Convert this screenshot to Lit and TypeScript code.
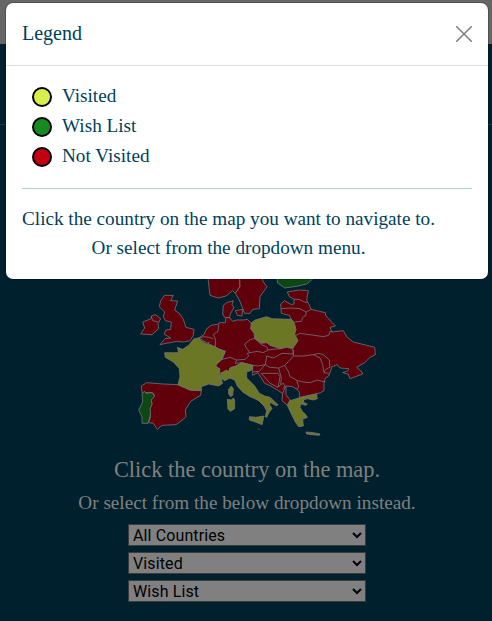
import { LitElement, html, css, svg } from "lit";
import { customElement } from "lit/decorators.js";

// Map geometry is drawn on a 750 x 510 grid, three units to a pixel.
const red = [
  // Great Britain, Ireland
  "M104 76 130 76 122 92 143 93 134 120 150 132 160 148 168 172 192 178 190 196 180 212 160 216 140 214 122 218 108 220 90 224 105 206 122 204 102 192 108 180 122 178 124 156 106 152 100 140 104 126 88 110 92 92Z",
  "M64 138 76 134 92 146 84 160 86 176 66 194 32 192 44 174 38 156 64 146Z",
  // Norway, Sweden, Denmark
  "M234 0 234 24 240 76 264 84 288 78 308 62 316 70 330 50 328 0Z",
  "M328 0 330 50 316 70 328 90 344 130 360 130 368 118 388 116 390 80 411 50 400 36 388 0Z",
  "M310 92 290 98 280 106 278 132 284 142 298 144 302 130 312 112 306 104Z",
  "M316 122 338 118 336 138 322 136Z",
  // Continental block
  "M206 204 222 194 230 176 244 166 266 162 268 158 286 158 288 142 300 144 308 154 320 150 340 150 352 148 364 160 484 148 478 136 454 130 452 102 464 92 484 104 492 102 492 88 478 80 472 66 506 60 535 62 530 90 544 118 568 124 586 128 588 138 616 168 600 172 606 186 640 182 650 200 670 216 710 226 734 232 736 254 720 262 704 278 680 292 696 306 698 312 660 326 654 312 638 308 654 302 656 296 630 294 622 284 606 290 600 308 596 318 586 324 582 340 582 362 572 368 556 372 530 378 508 382 508 366 501 358 488 350 468 348 468 374 480 390 472 406 456 392 458 370 442 360 418 346 404 340 394 324 384 308 368 316 368 286 336 278 318 288 300 294 296 306 272 310 258 290 258 284 276 268 286 244 256 232Z",
  "M34 348 50 338 100 342 144 344 180 360 214 362 212 376 182 394 166 420 168 440 160 448 138 464 96 466 82 478 70 460 56 458 62 440 58 420 66 400 62 390 74 376 68 368 36 368Z",
];
const olive = [
  "M192 206 206 204 214 212 230 222 256 230 266 238 286 244 278 262 276 268 258 284 258 290 270 296 268 310 272 324 278 340 266 348 236 342 214 350 214 362 180 360 144 344 150 320 148 296 130 276 106 262 104 248 130 248 146 248 142 232 158 238 176 226Z",
  "M272 310 290 300 296 306 300 294 318 288 336 278 368 286 366 300 350 306 350 324 374 348 388 370 404 378 420 382 444 404 440 408 422 398 418 402 426 416 418 426 410 442 406 440 410 422 402 408 386 392 370 384 360 380 338 366 322 348 314 330 300 324 284 332 272 324Z",
  "M304 348 310 356 308 376 302 380 296 372 296 358Z",
  "M292 388 304 390 310 384 314 390 314 416 302 424 294 418Z",
  "M358 440 378 442 402 438 396 464 376 456 358 450Z",
  "M472 406 480 392 506 384 530 378 560 372 562 386 550 390 532 386 520 390 522 398 532 402 528 406 512 402 510 412 518 426 526 432 532 442 518 448 520 468 506 470 496 456 486 436Z",
  "M528 486 550 488 570 492 568 496 546 494 530 492Z",
  "M364 158 376 150 410 140 426 146 484 148 492 156 498 178 494 192 504 212 488 236 470 232 452 236 420 226 410 218 394 220 374 206 372 190 362 176Z",
];
const green = [
  "M36 370 44 364 48 370 66 368 74 378 64 390 66 404 60 416 62 430 54 460 36 460 36 440 26 420 38 396Z",
  "M442 0 442 38 464 54 500 49 530 42 548 27 540 0Z",
];
const borders = [
  "M64 138 68 152 84 156",
  "M492 88 508 88 520 95 532 98",
  "M454 116 480 114 510 116 528 126 544 118",
  "M528 126 528 136 518 142 514 154 494 156",
  "M498 196 510 190 540 194 580 200 596 196 600 184 606 186",
  "M266 164 264 184 250 194 256 206 256 232",
  "M206 204 222 200 238 202 250 206 M232 222 240 214",
  "M374 206 362 208 344 222 348 232 360 248 382 244 400 248 414 240 410 230 394 224 376 206",
  "M414 240 426 238 452 236 M410 258 430 264 456 250 490 252 488 236",
  "M276 268 300 262 320 270 346 268 356 258 352 250 360 248 M320 270 316 280 336 278",
  "M368 286 384 288 406 284 410 258 M406 284 420 292 446 294 464 286 476 274 490 258 490 240",
  "M490 258 520 258 550 254 570 264 578 284 582 308 598 310",
  "M550 254 566 250 580 254 598 270 600 292 590 296 582 306",
  "M368 306 388 304 400 290 406 284 M394 310 444 310 450 320 444 352 420 340 394 310",
  "M446 294 454 324 452 344 460 340 466 352 458 370 M464 286 476 306 480 320 500 330 506 350 501 358",
  "M502 332 520 336 540 338 562 330 586 336",
  "M444 352 452 344 M468 348 458 356",
];

@customElement("country-map")
export class CountryMap extends LitElement {
  static styles = css`
    :host { display: block; width: 250px; height: 170px; }
    svg { display: block; }
    path { stroke: #73737b; stroke-width: 2.4; stroke-linejoin: round; }
    .red { fill: #60000a; }
    .olive { fill: #6c7726; }
    .green { fill: #0d4714; }
    .line { fill: none; }
  `;
  render() {
    const draw = (list: string[], kind: string) => list.map((d) => svg`<path class=${kind} d=${d}></path>`);
    return html`<svg width="250" height="170" viewBox="0 0 750 510">
      ${draw(red, "red")}${draw(borders, "line")}${draw(olive, "olive")}${draw(green, "green")}
      <path class="olive" d="M385 476 389 479"></path>
    </svg>`;
  }
}

@customElement("app-root")
export class AppRoot extends LitElement {
  static styles = css`
    :host { display: block; position: relative; height: 621px; overflow: hidden; background: #00202d; color: #003f5c; font-family: "Liberation Serif", serif; }
    .top { height: 44px; background: #666; }
    .nav { height: 80px; border-bottom: 1px solid #1a3642; }
    .page { display: flex; flex-direction: column; align-items: center; padding-top: 145px; color: #808080; }
    country-map { margin-left: 18px; }
    .lead { margin: 15px 0 0 2px; font-size: 22.4px; line-height: 30px; white-space: nowrap; }
    .sub { margin: 4px 0 7px 2px; font-size: 19.2px; line-height: 28px; white-space: nowrap; }
    .pick { box-sizing: border-box; display: flex; align-items: center; justify-content: space-between; width: 238px; height: 22px; margin: 0 0 6px 2px; padding: 0 3px 0 4px; border: 1px solid #3b3b3b; background: #808080; color: #000; font: 16px Roboto, sans-serif; letter-spacing: 0.12px; }
    .pick svg { display: block; }
    .dialog { position: absolute; left: 6px; top: 3px; width: 482px; height: 276px; border-radius: 7px; background: #fff; box-shadow: 0 0 0 1px rgba(0, 0, 0, 0.2); }
    .head { box-sizing: border-box; display: flex; align-items: center; justify-content: space-between; height: 63px; padding: 0 16px; border-bottom: 1px solid #dee2e6; font-size: 20px; }
    .title { padding-bottom: 2px; }
    .body { padding: 15px 16px 0; font-size: 19.2px; }
    .item { display: flex; align-items: center; height: 30px; padding-left: 10px; gap: 10px; }
    .dot { box-sizing: border-box; width: 20px; height: 20px; border: 2px solid #000; border-radius: 50%; position: relative; top: 1px; }
    .visited { background: #d8ee4b; }
    .wish { background: #178a24; }
    .not { background: #c20012; }
    .rule { height: 1px; margin: 17px 0 15px; background: #b4cbd0; }
    .tip { width: 413px; text-align: center; line-height: 29px; white-space: nowrap; }
  `;
  render() {
    const kinds = [["visited", "Visited"], ["wish", "Wish List"], ["not", "Not Visited"]];
    return html`
      <div class="top"></div>
      <div class="nav"></div>
      <main class="page">
        <country-map></country-map>
        <div class="lead">Click the country on the map.</div>
        <div class="sub">Or select from the below dropdown instead.</div>
        ${["All Countries", "Visited", "Wish List"].map((name) => html`<div class="pick" role="combobox">
          <span>${name}</span>
          <svg width="10" height="8" viewBox="0 0 10 8"><path d="M1 2 5 6 9 2" fill="none" stroke="#000" stroke-width="2"></path></svg>
        </div>`)}
      </main>
      <section class="dialog" role="dialog">
        <div class="head">
          <span class="title">Legend</span>
          <svg width="16" height="16" viewBox="0 0 16 16"><path d="M.7 .7 15.3 15.3M15.3 .7 .7 15.3" fill="none" stroke="#808080" stroke-width="1.6" stroke-linecap="round"></path></svg>
        </div>
        <div class="body">
          ${kinds.map(([kind, name]) => html`<div class="item"><span class="dot ${kind}"></span><span>${name}</span></div>`)}
          <div class="rule"></div>
          <div class="tip">Click the country on the map you want to navigate to.<br />Or select from the dropdown menu.</div>
        </div>
      </section>
    `;
  }
}
